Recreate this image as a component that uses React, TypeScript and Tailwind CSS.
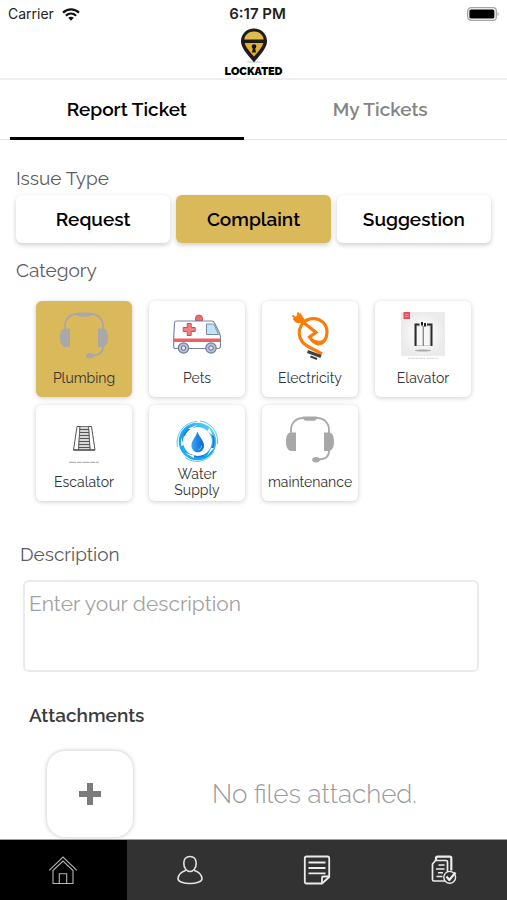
import { useState } from "react"
import type { ReactNode } from "react"
import clsx from "clsx"

interface Category {
  name: string
  icon: ReactNode
}

function WifiIcon() {
  return (
    <svg viewBox="0 0 18 13" className="h-[13px] w-[18px]" fill="none" stroke="#111" strokeWidth="2.2" aria-hidden="true">
      <path d="M1 4.6C5.6.2 12.4.2 17 4.6" />
      <path d="M3.9 7.7c3-2.8 7.2-2.8 10.2 0" />
      <path d="M6.2 9.8c1.7-1.5 3.9-1.5 5.6 0L9 12.8z" fill="#111" stroke="none" />
    </svg>
  )
}

function BatteryIcon() {
  return (
    <svg viewBox="0 0 32 14" className="h-[14px] w-8" aria-hidden="true">
      <rect x="0.7" y="0.7" width="28.6" height="12.6" rx="3.4" fill="#fff" stroke="#a5a5a5" strokeWidth="1.3" />
      <rect x="2.4" y="2.4" width="25" height="9.2" rx="1.6" fill="#000" />
      <path d="M30.6 5v4c1.4-.5 1.4-3.5 0-4z" fill="#999" />
    </svg>
  )
}

function LogoPin() {
  return (
    <svg viewBox="0 0 28 36" className="h-9 w-7 shrink-0" aria-hidden="true">
      <ellipse cx="14" cy="34" rx="8" ry="1.2" fill="#dcdce4" />
      <path d="M14 0.5C6.5 0.5 1 6 1 13.2C1 20 7.5 26.5 14 34.2C20.5 26.5 27 20 27 13.2C27 6 21.5 0.5 14 0.5z" fill="#1d1b1c" />
      <path d="M14 3.6C8.7 3.6 4.8 7 4.3 11.4H23.7C23.2 7 19.3 3.6 14 3.6z" fill="#e0b94f" />
      <path d="M4.7 15C5.8 19.4 9.7 23.6 14 28.6C18.3 23.6 22.2 19.4 23.3 15z" fill="#e3b02c" />
      <circle cx="14" cy="18.5" r="2.3" fill="#111" />
      <path d="M13.2 19H14.8L16 24.6H12z" fill="#111" />
    </svg>
  )
}

function HeadsetIcon() {
  return (
    <svg viewBox="0 0 48 48" className="size-12 shrink-0" fill="none" stroke="#a8a8a8" strokeWidth="1.8" aria-hidden="true">
      <path d="M5 18V14C5 7 10 2 17 2H31C38 2 43 7 43 14V18" />
      <path d="M17 0.5H31C31 3 30 4.7 28 4.7H20C18 4.7 17 3 17 0.5z" fill="#a8a8a8" stroke="none" />
      <path d="M10 16.5H5C2 16.5 0 19.5 0 25.5S2 34.5 5 35H10zM38 16.5H43C46 16.5 48 19.5 48 25.5S46 34.5 43 35H38z" fill="#a8a8a8" stroke="none" />
      <path d="M43 35C43 40.5 39 43.5 32 43.5" />
      <ellipse cx="30" cy="43.7" rx="3.8" ry="2.7" fill="#a8a8a8" stroke="none" />
    </svg>
  )
}

function AmbulanceIcon() {
  return (
    <svg viewBox="0 0 48 48" className="size-12 shrink-0" aria-hidden="true">
      <path d="M22.5 8.5V6.5a3.5 3.5 0 0 1 7 0v2z" fill="#ef6a6a" stroke="#c94f55" strokeWidth="1" />
      <path
        d="M3 9H38.5C40 9 40.9 9.6 41.5 11L46 20L47.5 24.5V34C47.5 35.5 46.5 36.5 45 36.5H2.5C1.3 36.5 0.7 35.8 0.7 34.5V25L1.5 11C1.6 9.7 2 9 3 9z"
        fill="#fff"
        stroke="#7688a5"
        strokeWidth="1.2"
      />
      <path d="M33.5 12H39.7C40.5 12 41 12.4 41.4 13.2L45.5 22.5H33.5z" fill="#bfe4fa" stroke="#7688a5" strokeWidth="1" />
      <path d="M1 26.5H47.3V30H1z" fill="#e86464" />
      <path d="M14.2 11.5h4v4h4v4h-4v4h-4v-4h-4v-4h4z" fill="#f08080" stroke="#d24b50" strokeWidth="1" />
      <circle cx="10.5" cy="36" r="5.2" fill="#b9bfd6" stroke="#6f7f9f" strokeWidth="1.2" />
      <circle cx="10.5" cy="36" r="2.2" fill="#e5e8f4" stroke="#62708f" strokeWidth="1" />
      <circle cx="38" cy="36" r="5.2" fill="#b9bfd6" stroke="#6f7f9f" strokeWidth="1.2" />
      <circle cx="38" cy="36" r="2.2" fill="#e5e8f4" stroke="#62708f" strokeWidth="1" />
    </svg>
  )
}

function BulbIcon() {
  return (
    <svg viewBox="0 0 48 48" className="size-12 shrink-0" fill="none" aria-hidden="true">
      <g stroke="#f97d0b">
        <path d="M12 8L18 11.5" strokeWidth="2.5" />
        <path d="M8 7L14 2.5L17.5 7.5C16.5 9.5 12.5 11 10 9.5z" fill="#f97d0b" strokeWidth="2" />
        <path d="M9 5.5L6.5 3.5M13 3.5L11.5 0.5" strokeWidth="2" />
        <path
          d="M36 42C29 37 20.5 35.5 16 29.5C12.5 24.5 12.5 18 15.5 13C18 9 22.5 6.6 27.5 6.6C35 6.6 41 12.5 41 20C41 26 38 31.5 32.5 31.8C28.5 31.8 26 29 23.5 25L30 20.5L17.5 10.5"
          strokeWidth="3.2"
        />
        <path d="M25 26.5C28 32 34 33.5 38 28L34.5 29.5C31 30 28 28.5 25 26.5z" fill="#f97d0b" strokeWidth="1.5" />
      </g>
      <path d="M21.5 39.5L35 44.5" stroke="#414141" strokeWidth="3" />
      <path d="M24.5 44.5L31 47" stroke="#414141" strokeWidth="2" />
    </svg>
  )
}

function ElevatorIcon() {
  return (
    <svg viewBox="0 0 48 48" className="size-12 shrink-0" fill="none" aria-hidden="true">
      <defs>
        <radialGradient id="lift-bg">
          <stop offset="0.3" stopColor="#fbfbfb" />
          <stop offset="1" stopColor="#ebebeb" />
        </radialGradient>
      </defs>
      <path d="M2 0H46V44H2z" fill="url(#lift-bg)" />
      <path d="M4.5 0H11V7H4.5z" fill="#ee4b5c" />
      <path d="M6 2.5H9.5M6 4.5H9.5" stroke="#f9b3ba" strokeWidth="0.8" />
      <path d="M17.5 14H24V33.5H17.5zM24.5 14H31V33.5H24.5z" fill="#f7f7f7" stroke="#aaa" strokeWidth="0.5" />
      <path d="M20.5 12.5H16.5V34M28 12.5H32.5V34" stroke="#2b2b2b" strokeWidth="2" />
      <path d="M24.3 14V34" stroke="#666" strokeWidth="0.8" />
      <path d="M23 10V13.5M26 11V14.5" stroke="#222" strokeWidth="2" />
      <ellipse cx="24" cy="38.5" rx="8" ry="1" fill="#aaa" />
      <path d="M9 46.3H26M28 46.3H39" stroke="#ccc" strokeWidth="1" strokeDasharray="2 0.6" />
    </svg>
  )
}

function EscalatorIcon() {
  return (
    <svg viewBox="0 0 48 48" className="size-12 shrink-0" fill="none" stroke="#555" aria-hidden="true">
      <path d="M17 10.5H20L18.5 34H13.5zM28.5 10.5H31.5L35 34H30z" fill="#fff" strokeWidth="1" />
      <path d="M20 10.5H28.5L30 34H18.5z" fill="#d8d8d8" strokeWidth="0.8" />
      <path d="M20 13.5H29M20 16.5H29M19.5 19.5H29.2M19.5 22.5H29.2M19 25.5H29.5M19 28.5H29.5M19 31.5H30" strokeWidth="1.1" />
      <path d="M13.5 34H35" strokeWidth="1.4" />
      <path d="M9 46.3H39" stroke="#888" strokeWidth="0.8" strokeDasharray="7 0.8 5 0.8" />
    </svg>
  )
}

function WaterIcon() {
  return (
    <svg viewBox="0 0 48 48" className="size-12 shrink-0" fill="none" aria-hidden="true">
      <defs>
        <linearGradient id="swirl" x1="0" y1="1" x2="1" y2="0">
          <stop offset="0" stopColor="#1fb4f2" />
          <stop offset="0.5" stopColor="#1b9cf0" />
          <stop offset="1" stopColor="#5fdcfa" />
        </linearGradient>
        <linearGradient id="drop" x1="0" y1="0" x2="1" y2="0">
          <stop offset="0" stopColor="#36a9f3" />
          <stop offset="1" stopColor="#0b62d3" />
        </linearGradient>
      </defs>
      <circle cx="24.5" cy="25.5" r="16.6" stroke="url(#swirl)" strokeWidth="4.4" />
      <g stroke="#4cc9f7" strokeWidth="1">
        <path d="M4.5 31C2 18 11 6.5 24 5.5" />
        <path d="M12 41.5C22 48.5 35 45.5 41 35.5" />
        <path d="M44.5 28C46 17 38 6 27 5" />
      </g>
      <path d="M11 20C13 15 17 11.5 22 10.5M38.5 17C41.5 22 41.5 28 39 33M31 39.5C26 41.5 21 41 17 38.5" stroke="#1479e0" strokeWidth="1.5" />
      <path d="M15 12.5L25 8.5L18 13.5zM36 12L40.5 20L34.5 15zM41 32L34 40L38 32zM21 42L12 37L21 39.5zM8 30V22L11 29z" fill="#fff" />
      <path d="M24.5 15.5C25.8 20.2 31 24.500 31 30a6.300 6.300 0 0 1-12.600 0C18.400 24.500 23.200 20.200 24.500 15.500z" fill="url(#drop)" />
      <path d="M28.5 29.5C28.5 32 27.3 33.2 25.5 33.8" stroke="#8fd4ff" strokeWidth="0.9" />
    </svg>
  )
}

function HomeIcon() {
  return (
    <svg viewBox="0 0 30 30" className="size-[30px]" fill="none" stroke="#b5b5b5" strokeWidth="1.1" aria-hidden="true">
      <path d="M1.2 15.3L15 2L28.8 15.3" />
      <path d="M5 28.5V15.5L15 6L25 15.5V28.5z" />
      <path d="M11.3 28.5V18.8H18.7V28.5" />
    </svg>
  )
}

function UserIcon() {
  return (
    <svg viewBox="0 0 30 30" className="size-[30px]" fill="none" stroke="#e2e2e2" strokeWidth="1.6" aria-hidden="true">
      <path d="M15 1.5c3.9 0 6.2 2.8 6.2 6.8 0 4.6-2.7 8.2-6.2 8.2s-6.2-3.6-6.2-8.2c0-4 2.3-6.8 6.2-6.8z" />
      <path d="M11 15.2c-4.5 1.6-8 3.6-8 8.6 0 3 6 4.7 12 4.7s12-1.7 12-4.7c0-5-3.5-7-8-8.6" />
    </svg>
  )
}

function NoteIcon() {
  return (
    <svg viewBox="0 0 30 30" className="size-[30px]" fill="none" stroke="#ececec" strokeWidth="1.8" strokeLinejoin="round" aria-hidden="true">
      <path d="M4.5 1.5h21c1.1 0 1.7.6 1.7 1.7V22L20 28.5H4.5c-1.1 0-1.7-.6-1.7-1.7V3.2c0-1.1.6-1.7 1.7-1.7z" />
      <path d="M27 21.5h-5.5c-1 0-1.5.5-1.5 1.5v5.5" />
      <path d="M6.5 7.5h17M6.5 13h17M6.5 18.3h17" />
    </svg>
  )
}

function TasksIcon() {
  return (
    <svg viewBox="0 0 30 30" className="size-[30px]" fill="none" stroke="#ececec" strokeWidth="1.7" strokeLinejoin="round" aria-hidden="true">
      <path d="M16 26H5c-1 0-1.5-.5-1.5-1.5V9l3-3.5H17c1 0 1.5.5 1.5 1.5v10" />
      <path d="M7 5V3.2c0-1 .5-1.5 1.5-1.5h12.3c1 0 1.5.5 1.5 1.5v12.3" strokeWidth="2.2" />
      <path d="M9.5 10h6M7 14h8.5M9 17.7h5M7.5 21.5h6" strokeWidth="1.5" />
      <circle cx="20.7" cy="22.3" r="5.9" fill="#323232" strokeWidth="1.4" />
      <path d="M17.5 21.5l2.8 3.5 6.2-7.5" strokeWidth="2.2" />
    </svg>
  )
}

const issueTypes = ["Request", "Complaint", "Suggestion"]

const categories: Category[] = [
  { name: "Plumbing", icon: <HeadsetIcon /> },
  { name: "Pets", icon: <AmbulanceIcon /> },
  { name: "Electricity", icon: <BulbIcon /> },
  { name: "Elavator", icon: <ElevatorIcon /> },
  { name: "Escalator", icon: <EscalatorIcon /> },
  { name: "Water Supply", icon: <WaterIcon /> },
  { name: "maintenance", icon: <HeadsetIcon /> },
]

const navItems = [
  { label: "Home", icon: <HomeIcon /> },
  { label: "Profile", icon: <UserIcon /> },
  { label: "Notes", icon: <NoteIcon /> },
  { label: "Tasks", icon: <TasksIcon /> },
]

const tabs = ["Report Ticket", "My Tickets"]

export default function App() {
  const [tab, setTab] = useState("Report Ticket")
  const [issueType, setIssueType] = useState("Complaint")
  const [category, setCategory] = useState("Plumbing")
  const [description, setDescription] = useState("")

  return (
    <div className="flex min-h-screen flex-col bg-white font-[Raleway,Lato,sans-serif] text-black">
      {/* Status bar */}
      <div className="grid h-7 grid-cols-3 items-center px-2 font-[Inter,sans-serif] text-sm text-[#222]">
        <div className="flex items-center gap-2">
          <span>Carrier</span>
          <WifiIcon />
        </div>
        <span className="pl-2 text-center text-[15px] font-semibold">6:17 PM</span>
        <div className="flex justify-end">
          <BatteryIcon />
        </div>
      </div>

      {/* Logo */}
      <header className="flex h-[52px] flex-col items-center border-b-2 border-[#efefef]">
        <LogoPin />
        <span className="text-[11px] leading-4 font-black">LOCKATED</span>
      </header>

      {/* Tabs */}
      <div role="tablist" className="grid grid-cols-2 border-b border-[#e4e4e4]">
        {tabs.map(name => (
          <button
            key={name}
            role="tab"
            aria-selected={tab === name}
            onClick={() => setTab(name)}
            className={clsx(
              "mx-[10px] -mb-px h-[60px] border-b-3 pt-[2px] text-[19px] font-semibold",
              tab === name ? "border-black text-black" : "border-transparent text-[#858585]",
            )}>
            {name}
          </button>
        ))}
      </div>

      <main className="flex-1">
        {/* Issue type */}
        <section className="px-4 pt-[26px]">
          <h2 className="text-[19px] leading-6 text-[#5c5c5c]">Issue Type</h2>
          <div className="mt-[5px] grid grid-cols-3 gap-[6px]">
            {issueTypes.map(type => (
              <button
                key={type}
                aria-pressed={issueType === type}
                onClick={() => setIssueType(type)}
                className={clsx(
                  "h-12 rounded-md text-[19px] font-semibold shadow-[0_2px_5px_rgba(0,0,0,0.2)]",
                  issueType === type ? "bg-[#dab95b]" : "bg-white",
                )}>
                {type}
              </button>
            ))}
          </div>
        </section>

        {/* Category */}
        <section className="pt-[15px]">
          <h2 className="px-4 text-[19px] leading-6 text-[#5c5c5c]">Category</h2>
          <div className="mt-[19px] grid grid-cols-4 gap-x-[17px] gap-y-2 px-9">
            {categories.map(item => (
              <button
                key={item.name}
                aria-pressed={category === item.name}
                onClick={() => setCategory(item.name)}
                className={clsx(
                  "flex h-24 flex-col items-center gap-[2px] rounded-md pt-[11px] shadow-[0_1px_5px_rgba(0,0,0,0.2)]",
                  category === item.name ? "bg-[#dab95b]" : "bg-white",
                )}>
                {item.icon}
                <span className="flex h-8 max-w-20 items-center justify-center text-sm leading-4 text-[#333]">
                  {item.name}
                </span>
              </button>
            ))}
          </div>
        </section>

        {/* Description */}
        <section className="px-5 pt-[41px]">
          <label htmlFor="description" className="block text-[19px] leading-6 text-[#5c5c5c]">
            Description
          </label>
          <div className="mt-[14px] pr-2 pl-[3px]">
            <textarea
              id="description"
              value={description}
              onChange={e => setDescription(e.target.value)}
              placeholder="Enter your description"
              className="block h-[92px] w-full resize-none rounded-md border-2 border-[#ebebeb] px-1 py-2 text-[21px] leading-7 placeholder:text-[#a3a3a3]"
            />
          </div>
        </section>

        {/* Attachments */}
        <section className="pt-[31px]">
          <h2 className="px-[29px] text-[19px] leading-6 font-semibold text-[#3c3c3c]">Attachments</h2>
          <div className="mt-6 flex items-center pr-[11px] pl-[47px]">
            <button
              aria-label="Add attachment"
              className="flex size-[86px] items-center justify-center rounded-[18px] bg-white shadow-[0_0_4px_rgba(0,0,0,0.25)]">
              <svg viewBox="0 0 22 22" className="size-[22px]" aria-hidden="true">
                <path d="M8 0h6v8h8v6h-8v8H8v-8H0V8h8z" fill="#7b7b7b" />
              </svg>
            </button>
            <p className="flex-1 text-center text-[26px] leading-8 font-light text-[#9a9a9a]">No files attached.</p>
          </div>
        </section>
      </main>

      {/* Bottom navigation */}
      <nav className="sticky bottom-0 grid grid-cols-4 border-t border-[#a0a0a0] bg-[#323232]">
        {navItems.map((item, i) => (
          <a
            key={item.label}
            href="#"
            aria-label={item.label}
            className={clsx("flex h-[60px] items-center justify-center", i === 0 && "bg-black")}>
            {item.icon}
          </a>
        ))}
      </nav>
    </div>
  )
}
